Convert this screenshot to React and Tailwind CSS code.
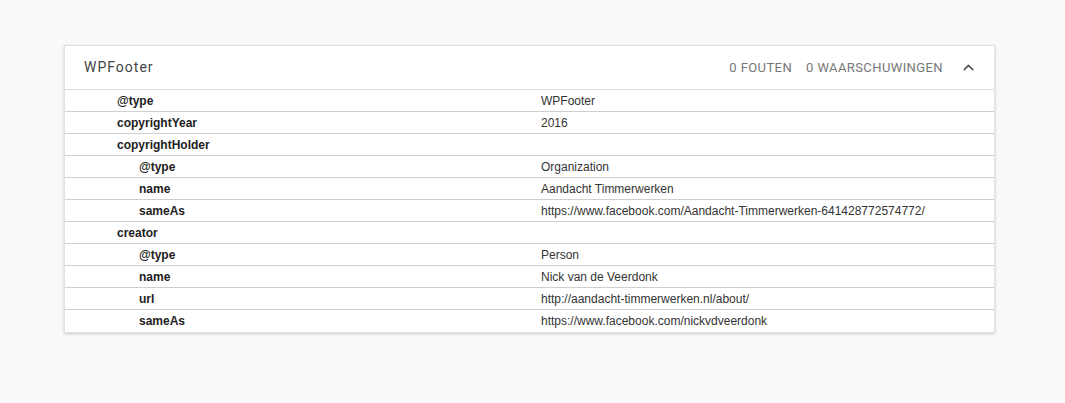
import { ChevronUp } from "lucide-react";

const rows = [
  { key: "@type", value: "WPFooter", level: 0 },
  { key: "copyrightYear", value: "2016", level: 0 },
  { key: "copyrightHolder", value: "", level: 0 },
  { key: "@type", value: "Organization", level: 1 },
  { key: "name", value: "Aandacht Timmerwerken", level: 1 },
  { key: "sameAs", value: "https://www.facebook.com/Aandacht-Timmerwerken-641428772574772/", level: 1 },
  { key: "creator", value: "", level: 0 },
  { key: "@type", value: "Person", level: 1 },
  { key: "name", value: "Nick van de Veerdonk", level: 1 },
  { key: "url", value: "http://aandacht-timmerwerken.nl/about/", level: 1 },
  { key: "sameAs", value: "https://www.facebook.com/nickvdveerdonk", level: 1 },
];

export default function App() {
  return (
    <div className="min-h-[403px] bg-[#f9f9f9] pt-[45px] pl-[64px]">
      <section className="w-[931px] bg-white border border-[#e2e2e2] shadow-[0_1px_3px_rgba(0,0,0,0.18)]">
        <header className="h-[44px] flex items-center justify-between pl-[19px] pr-[17px] border-b border-[#dedede] font-['Roboto',sans-serif]">
          <h2 className="text-[14px] tracking-[1px] text-[#444]">WPFooter</h2>
          <div className="flex items-center text-[13px] tracking-[0.4px] text-[#777]">
            <span>0 FOUTEN</span>
            <span className="ml-[14px]">0 WAARSCHUWINGEN</span>
            <ChevronUp className="ml-[17px] w-[17px] h-[17px] text-[#555]" strokeWidth={2.2} />
          </div>
        </header>
        <div className="font-['Liberation_Sans',Arial,sans-serif] text-[12px] text-[#222]">
          {rows.map((row, i) => (
            <div
              key={i}
              className="flex items-center h-[22px] border-b border-[#cfcfcf] last:border-b-0"
            >
              <div className="w-[476px] shrink-0 pl-[52px]">
                <span className={`font-bold ${row.level === 1 ? "pl-[22px]" : ""}`}>{row.key}</span>
              </div>
              <div className="text-[#333]">{row.value}</div>
            </div>
          ))}
        </div>
      </section>
    </div>
  );
}
